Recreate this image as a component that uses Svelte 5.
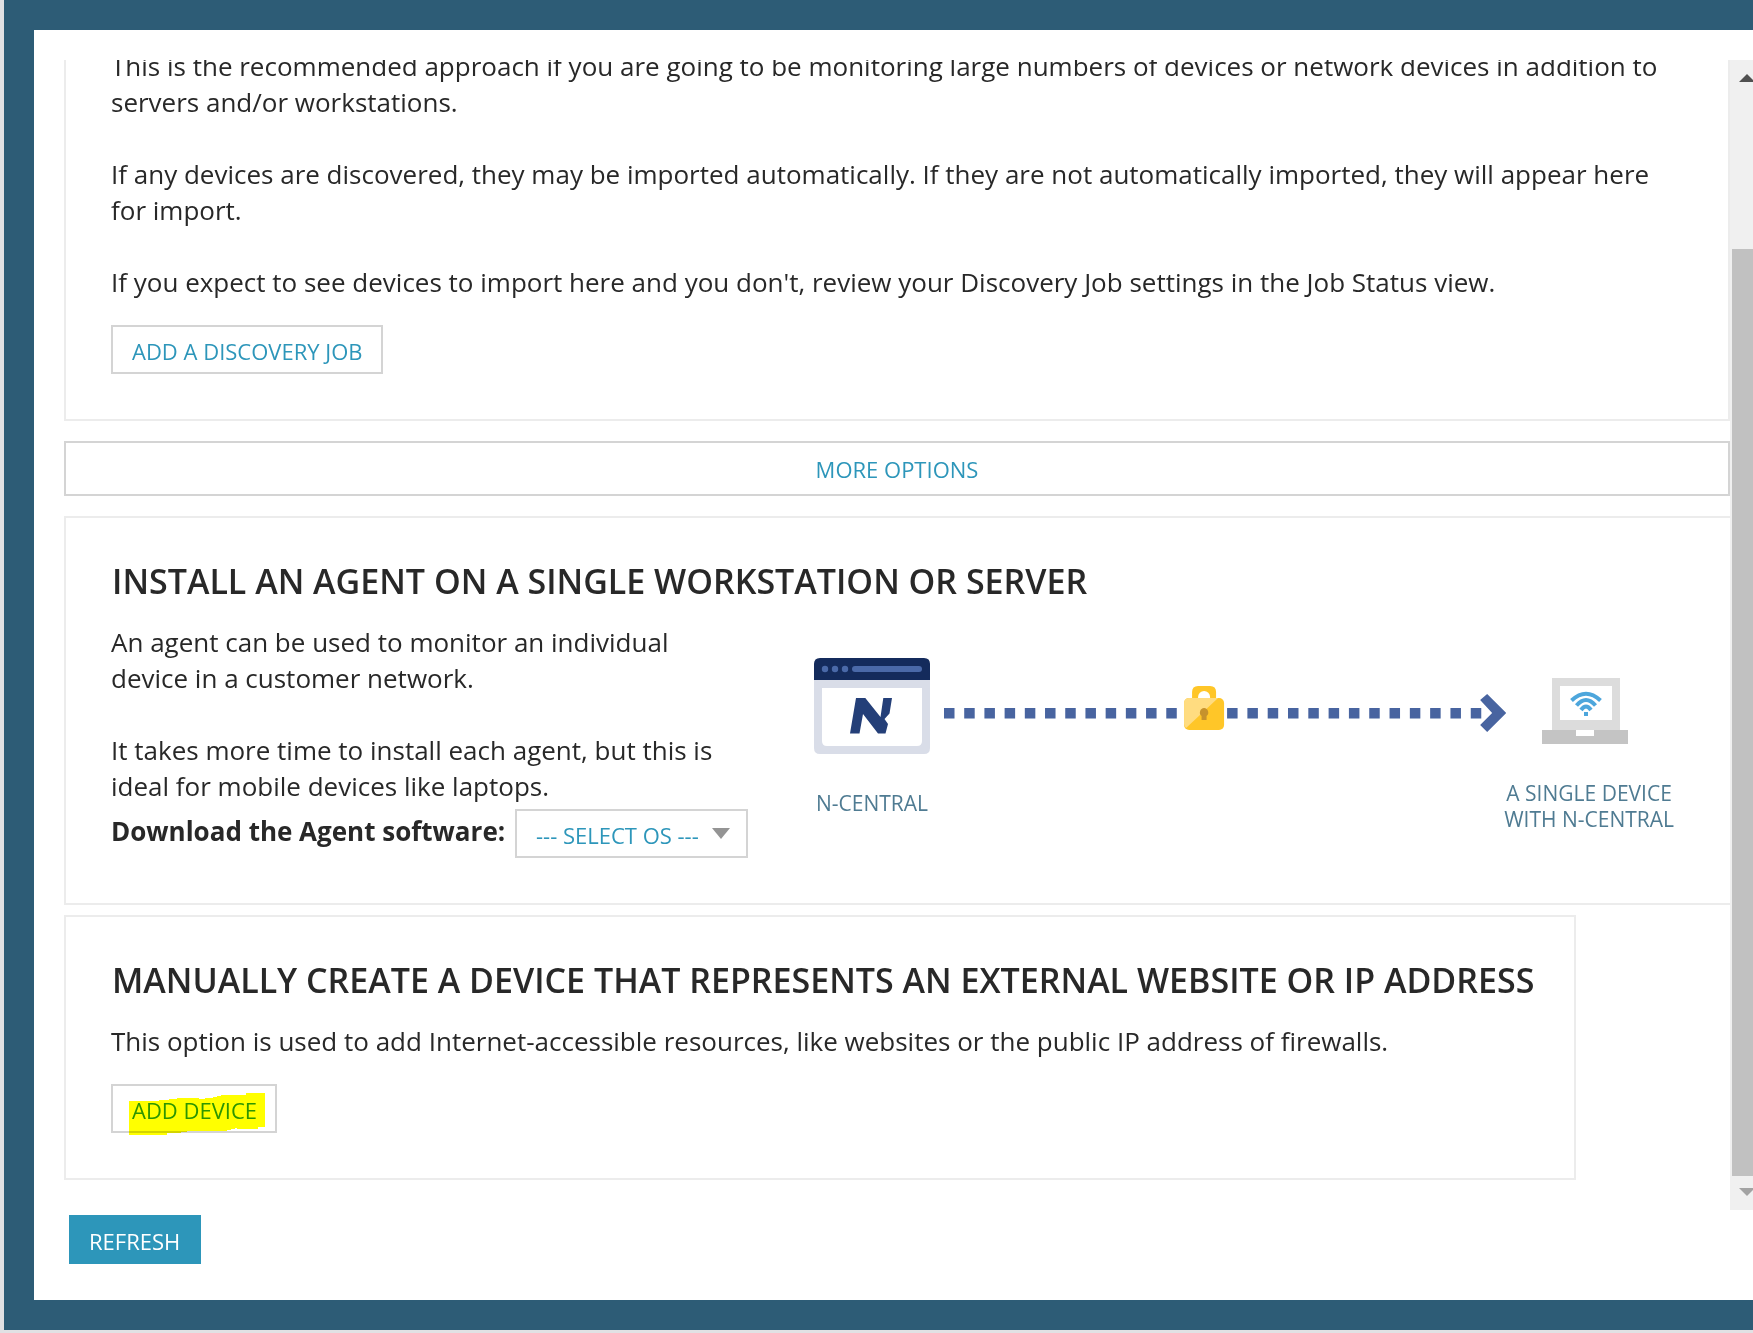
<script lang="ts">
  let os = $state("");

  const systems = ["Windows", "Linux", "macOS"];

  // Left edges of the dashes on each side of the padlock
  const dashesBefore = Array.from({ length: 12 }, (_, i) => i * 20.2);
  const dashesAfter = Array.from({ length: 13 }, (_, i) => 283 + i * 20.3);
</script>

<div class="page">
  <main class="dialog">
    <div class="viewport">
      <div class="content">
        <section class="card first">
          <p>
            This is the recommended approach if you are going to be monitoring large numbers of
            devices or network devices in addition to servers and/or workstations.
          </p>
          <p>
            If any devices are discovered, they may be imported automatically. If they are not
            automatically imported, they will appear here for import.
          </p>
          <p>
            If you expect to see devices to import here and you don't, review your Discovery Job
            settings in the Job Status view.
          </p>
          <button class="btn spaced" type="button">ADD A DISCOVERY JOB</button>
        </section>

        <button class="btn more" type="button">MORE OPTIONS</button>

        <section class="card wide">
          <h2>INSTALL AN AGENT ON A SINGLE WORKSTATION OR SERVER</h2>
          <div class="agent">
            <div class="about">
              <p>An agent can be used to monitor an individual device in a customer network.</p>
              <p>
                It takes more time to install each agent, but this is ideal for mobile devices like
                laptops.
              </p>
              <div class="download">
                <label for="os">Download the Agent software:</label>
                <span class="select">
                  <select id="os" bind:value={os}>
                    <option value="">--- SELECT OS ---</option>
                    {#each systems as name (name)}
                      <option value={name}>{name}</option>
                    {/each}
                  </select>
                  <svg class="caret" viewBox="0 0 18 11" width="18" height="11" aria-hidden="true">
                    <path d="M0 0h18l-9 11z" fill="#949494"/>
                  </svg>
                </span>
              </div>
            </div>

            <div class="diagram">
              <figure>
                <svg viewBox="0 0 116 96" width="116" height="96" aria-hidden="true">
                  <path d="M0 22h116v68q0 6-6 6H6q-6 0-6-6z" fill="#d9dde8"/>
                  <path d="M0 22V6q0-6 6-6h104q6 0 6 6v16z" fill="#142b5c"/>
                  <circle cx="11" cy="11" r="3.2" fill="#4a69a8"/>
                  <circle cx="21" cy="11" r="3.2" fill="#4a69a8"/>
                  <circle cx="31" cy="11" r="3.2" fill="#4a69a8"/>
                  <rect x="38" y="8" width="70" height="6" rx="3" fill="#4a69a8"/>
                  <path d="M8 30h100v53q0 5-5 5H13q-5 0-5-5z" fill="#fff"/>
                  <path
                    d="M42 40h9.300L66.500 59 69.300 40H78l-2.500 15.500-5 5.500 3.500 5-2.500 9.500H64L49 56l-3.500 19.500H36z"
                    fill="#243f78"
                  />
                </svg>
                <figcaption>N-CENTRAL</figcaption>
              </figure>

              <svg
                class="link"
                viewBox="0 0 562 54"
                preserveAspectRatio="xMinYMin meet"
                aria-hidden="true"
              >
                {#each [...dashesBefore, ...dashesAfter] as x}
                  <rect {x} y="22" width="10.500" height="10.500" fill="#4864a0"/>
                {/each}
                <path d="M536 14l7-6 19 19-19 19-7-7 12-12z" fill="#4864a0"/>
                <path d="M248 14V6q0-6 6-6h12q6 0 6 6v8h-6v-3a6 6 0 0 0-12 0v3z" fill="#ffc628"/>
                <rect x="240" y="12" width="40" height="32" rx="5" fill="#ffc628"/>
                <path d="M242 42q-2-2-2-4V17q0-5 5-5h29z" fill="#ffdc80"/>
                <path d="M260 22a4.500 4.500 0 0 1 2.500 8v4h-5v-4a4.500 4.500 0 0 1 2.500-8z" fill="#c6922c"/>
              </svg>

              <figure class="target">
                <svg viewBox="0 0 94 66" width="94" height="66" aria-hidden="true">
                  <path d="M10 0h68v52H10z" fill="#dcdcdc"/>
                  <path d="M18 8h52v34H18z" fill="#fff"/>
                  <path d="M0 52h86v14H0z" fill="#c4c4c4"/>
                  <path d="M34 52h18v6H34z" fill="#fff"/>
                  <g fill="none" stroke="#4da6dc" stroke-width="4">
                    <path d="M29.500 22.500Q44 9 58.500 22.500"/>
                    <path d="M34.500 27.500Q44 16.500 53.500 27.500"/>
                    <path d="M39 32Q44 25 49 32"/>
                  </g>
                  <rect x="42" y="34" width="4" height="4" fill="#4da6dc"/>
                </svg>
                <figcaption>A SINGLE DEVICE<br />WITH N-CENTRAL</figcaption>
              </figure>
            </div>
          </div>
        </section>

        <section class="card manual">
          <h2>MANUALLY CREATE A DEVICE THAT REPRESENTS AN EXTERNAL WEBSITE OR IP ADDRESS</h2>
          <p>
            This option is used to add Internet-accessible resources, like websites or the public IP
            address of firewalls.
          </p>
          <button class="btn spaced marked" type="button">
            ADD DEVICE
            <svg class="marker" viewBox="0 0 136 42" width="136" height="42" aria-hidden="true">
              <path
                d="M0 8h30V7h10V6h8V5h22v1h6V5h8V4h4V3h4V2h25V0h19v34h-7v2h-21v-1h-2v1h-4v1h-4v1H58v1h-6v1H38v2H0z"
                fill="#ff0"
              />
            </svg>
          </button>
        </section>
      </div>

      <div class="scrollbar" aria-hidden="true">
        <svg viewBox="0 0 23 34" width="23" height="34">
          <path d="M17 14l8 8H9z" fill="#505050"/>
        </svg>
        <div class="thumb"></div>
        <svg viewBox="0 0 23 34" width="23" height="34">
          <path d="M17 20l8-8H9z" fill="#a3a3a3"/>
        </svg>
      </div>
    </div>

    <button class="btn refresh" type="button">REFRESH</button>
  </main>
</div>

<style>
  :global(body) {
    background: #e1e1e4;
  }
  .page {
    padding: 0 0 3px 4px;
    font-family: "Open Sans", sans-serif;
    font-size: 26px;
    line-height: 36px;
    color: #282828;
  }
  .dialog {
    border: 30px solid #2d5c76;
    border-right: none;
    padding: 30px 0 36px 30px;
    background: #fff;
  }
  .viewport {
    display: flex;
    overflow: hidden;
  }
  .content {
    flex: 1;
    min-width: 0;
    padding-bottom: 30px;
  }

  .card {
    border: 2px solid #ececec;
    padding: 45px;
  }
  /* Scrolled part way through its first line */
  .card.first {
    border-top: none;
    padding-top: 0;
    margin-top: -12px;
  }
  .card.wide { margin-right: -2px; }
  .card.manual {
    width: fit-content;
    margin-top: 10px;
    padding-right: 40px;
  }
  h2 {
    margin: 0 0 25px 1px;
    font-size: 34px;
    font-weight: 600;
    line-height: 36px;
  }
  p { margin: 0; }
  p + p { margin-top: 36px; }

  .btn {
    display: block;
    border: 2px solid #d4d4d4;
    padding: 9px 19px 6px;
    background: #fff;
    color: #2d96ba;
    font: 22px/30px "Open Sans", sans-serif;
    cursor: pointer;
  }
  .btn.spaced { margin-top: 25px; }
  .btn.more {
    width: 100%;
    margin: 20px 0;
    padding: 11px 19px 10px;
  }
  .btn.refresh {
    margin: 5px 0 0 5px;
    padding-left: 18px;
    border-color: #2d96ba;
    background: #2d96ba;
    color: #fff;
  }
  .btn.marked {
    position: relative;
    padding-right: 18px;
  }
  .marker {
    position: absolute;
    left: 16px;
    top: 7px;
    mix-blend-mode: multiply;
  }

  .agent {
    display: flex;
    align-items: flex-start;
    gap: 66px;
  }
  .about { flex: 0 0 637px; }
  .download {
    display: flex;
    align-items: flex-start;
    justify-content: space-between;
    margin-top: 5px;
  }
  label {
    padding-top: 4px;
    font-weight: 700;
  }
  .select {
    position: relative;
    width: 233px;
  }
  select {
    display: block;
    box-sizing: border-box;
    width: 100%;
    height: 49px;
    border: 2px solid #d4d4d4;
    border-radius: 0;
    padding: 8px 30px 6px 19px;
    background: #fff;
    color: #2d96ba;
    font: 22px/30px "Open Sans", sans-serif;
    appearance: none;
  }
  .caret {
    position: absolute;
    right: 18px;
    top: 19px;
    pointer-events: none;
  }

  .diagram {
    display: flex;
    flex: 1;
    align-items: flex-start;
    min-width: 0;
    padding: 34px 11px 0 0;
  }
  figure {
    display: flex;
    flex-direction: column;
    align-items: center;
    gap: 36px;
    margin: 0;
  }
  figure.target { padding-top: 20px; }
  figcaption {
    font-size: 21px;
    line-height: 26px;
    color: #4f7b92;
    text-align: center;
    white-space: nowrap;
  }
  .link {
    flex: 1;
    min-width: 0;
    margin: 28px -2px 0 14px;
  }

  .scrollbar {
    display: flex;
    flex-direction: column;
    width: 23px;
    background: #f0f0f0;
  }
  .thumb {
    flex: 1;
    margin: 155px 0 0 2px;
    background: #c1c1c1;
  }
</style>
